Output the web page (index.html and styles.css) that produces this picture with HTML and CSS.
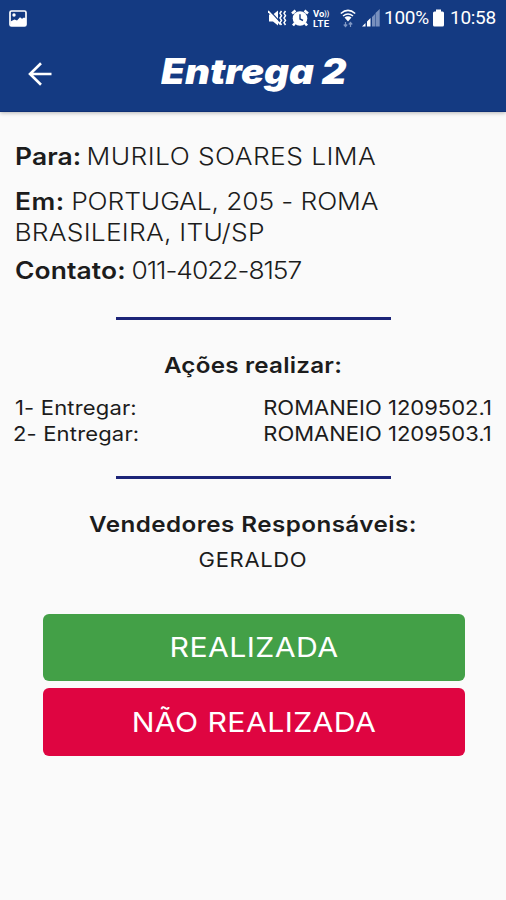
FILE: index.html
```html
<!DOCTYPE html>
<html lang="pt-BR">
<head>
<meta charset="utf-8">
<title>Entrega 2</title>
<link rel="stylesheet" href="styles.css">
</head>
<body>
<header class="header">
  <div class="status">
    <svg class="pic" width="18" height="17" viewBox="0 0 18 17"><rect x="1" y="1" width="16" height="15" rx="1.5" fill="none" stroke="#fff" stroke-width="1.7"/><path d="M1.500 11.500l4-2 2.500 1 3-3.200 2 1.500 2-1.200 2 1V16H1.500z" fill="#fff"/><circle cx="5" cy="5" r="1.700" fill="#fff"/></svg>
    <svg class="mute" width="19" height="18" viewBox="0 0 19 18"><path d="M1 5.500h4l5-4v15l-5-4H1z" fill="#fff"/><path d="M1.500 1.500l12 13" stroke="#143a82" stroke-width="1.200"/><path d="M0 2l12.500 13.500" stroke="#fff" stroke-width="1.800"/><path d="M13.500 2l-1.500 2.300 1.500 2.400-1.500 2.300 1.500 2.400-1.500 2.300 1.500 2.300M17.500 2L16 4.300l1.500 2.400L16 9l1.500 2.400-1.500 2.300 1.500 2.300" fill="none" stroke="#fff" stroke-width="1.500"/></svg>
    <svg class="alarm" width="18" height="18" viewBox="0 0 18 18"><circle cx="9" cy="9.500" r="7.300" fill="#fff"/><path d="M1 4.500L4.500 1.500M17 4.500l-3.500-3M4 14l-2 2.500M14 14l2 2.500" stroke="#fff" stroke-width="2.600"/><path d="M9 5.200V10l3 1.500" fill="none" stroke="#143a82" stroke-width="1.400"/></svg>
    <div class="volte"><span>Vo<i>))</i></span><span class="lte">LTE</span></div>
    <svg class="wifi" width="16" height="19" viewBox="0 0 16 19"><path d="M.8 4.500Q8-1.800 15.200 4.500" fill="none" stroke="#fff" stroke-width="1.500"/><path d="M3 7q5-4 10 0" fill="none" stroke="#fff" stroke-width="1.500"/><path d="M4.500 8.500Q8 5.800 11.500 8.500L8 12.500z" fill="#fff"/><path d="M5.500 13v4M3.800 15.500L5.500 17.500l1.700-2M10.500 18v-4M8.800 15.500l1.700-2 1.700 2" fill="none" stroke="#7f97c4" stroke-width="1.200"/></svg>
    <svg class="signal" width="18" height="18" viewBox="0 0 18 18"><path d="M0 17.500h3.500V14zM5 17.500h3.500V9L5 12.500z" fill="#fff"/><path d="M10 17.500h3V5l-3 3zM13.500 17.500h4.200V0l-4.200 4z" fill="#7890be"/></svg>
    <span class="pct">100%</span>
    <svg class="battery" width="11" height="18" viewBox="0 0 11 18"><path d="M3 .5h5v2h1.500q1.500 0 1.500 1.500v12q0 1.500-1.500 1.500h-8Q0 17.500 0 16V4q0-1.500 1.500-1.500H3z" fill="#fff"/></svg>
    <span class="clock">10:58</span>
  </div>
  <div class="bar">
    <svg class="back" width="24" height="24" viewBox="0 0 24 24"><path d="M23.500 12H2M13 1.200L2 12l11 10.800" fill="none" stroke="#fff" stroke-width="2.600"/></svg>
    <h1 class="title">Entrega 2</h1>
  </div>
</header>
<main>
  <section class="info">
    <p class="para"><b>Para:</b> <span class="name">MURILO SOARES LIMA</span></p>
    <p class="address"><b class="em">Em:</b> <span class="street">PORTUGAL, 205 - ROMA</span><br><span class="city">BRASILEIRA, ITU/SP</span></p>
    <p class="contact"><b>Contato:</b> <span class="phone">011-4022-8157</span></p>
  </section>
  <hr>
  <h2 class="actions-title">Ações realizar:</h2>
  <ul class="actions">
    <li><span class="task first">1- Entregar:</span><span class="doc">ROMANEIO 1209502.1</span></li>
    <li><span class="task">2- Entregar:</span><span class="doc">ROMANEIO 1209503.1</span></li>
  </ul>
  <hr>
  <h2 class="sellers-title">Vendedores Responsáveis:</h2>
  <p class="seller">GERALDO</p>
  <div class="buttons">
    <button class="done"><span>REALIZADA</span></button>
    <button class="not-done"><span>NÃO REALIZADA</span></button>
  </div>
</main>
</body>
</html>
```
FILE: styles.css
```css
* { box-sizing: border-box; margin: 0; padding: 0; }
body { width: 506px; height: 900px; overflow: hidden; background: #fafafa; color: #1c1c1c; font-family: "Inter", sans-serif; }
.header { height: 112px; background: #143a82; border-bottom: 1px solid #0f3075; box-shadow: 0 1px 4px rgba(0,0,0,.28); color: #fff; }
.status { display: flex; align-items: center; height: 36px; padding-left: 9px; font: 19px/36px "Roboto", sans-serif; }
.status svg { flex: none; }
.mute { margin-left: 241px; }
.alarm { margin-left: 4px; }
.volte { display: flex; flex-direction: column; width: 18px; margin-left: 4px; font: bold 9.500px/9px "Roboto", sans-serif; white-space: nowrap; }
.volte i { font-size: 7px; font-style: normal; vertical-align: 1px; }
.lte { letter-spacing: .4px; }
.wifi { margin-left: 9px; }
.signal { margin-left: 6px; }
.pct { width: 45px; margin-left: 4px; letter-spacing: -.3px; }
.battery { margin-left: 4px; }
.clock { margin-left: 6px; letter-spacing: -.3px; }
.bar { display: flex; align-items: center; height: 75px; padding-left: 28px; }
.title { margin-left: 109px; font: italic 900 35px/44px "Inter", sans-serif; transform: scaleX(1.1); transform-origin: left; white-space: nowrap; padding-bottom: 6px; }
.info { width: 430px; margin: 29px 0 0 14.500px; font-size: 24px; font-weight: 300; line-height: 31px; transform: scaleX(1.1); transform-origin: left; }
.info b { font-weight: 600; letter-spacing: .1px; }
.info .em { letter-spacing: .5px; }
.name { margin-left: -2px; letter-spacing: .38px; }
.street { margin-left: -1px; letter-spacing: -.1px; }
.city { margin-left: -.5px; letter-spacing: .2px; }
.phone { margin-left: -1.500px; letter-spacing: -.95px; }
.address { margin-top: 14px; }
.contact { margin-top: 7px; }
hr { width: 275px; height: 3px; margin: 31px auto 0 116px; border: 0; background: #1c2478; }
h2 { font-size: 22px; font-weight: 600; line-height: 30px; text-align: center; transform: scaleX(1.1); }
.actions-title { margin-top: 30px; letter-spacing: .2px; }
.actions { margin: 16px 14px 0 13px; list-style: none; font-size: 20px; line-height: 25.500px; }
.actions li { display: flex; justify-content: space-between; }
.task { transform: scaleX(1.1); transform-origin: left; letter-spacing: .15px; }
.first { margin-left: 1.500px; }
.doc { transform: scaleX(1.1); transform-origin: right; letter-spacing: 0; }
.actions + hr { margin-top: 29px; }
.sellers-title { margin-top: 30px; letter-spacing: .4px; }
.seller { margin-top: 8px; font-size: 20px; line-height: 26px; letter-spacing: .6px; text-align: center; transform: scaleX(1.1); }
.buttons { display: flex; flex-direction: column; gap: 7px; width: 422px; margin: 40.500px 0 0 42.500px; }
button { height: 67.500px; border: 0; border-radius: 6px; color: #fff; font: 27.500px "Inter", sans-serif; letter-spacing: .35px; }
button span { display: block; transform: scaleX(1.1); }
.done { background: #43a047; }
.not-done { background: #df0541; }
```
